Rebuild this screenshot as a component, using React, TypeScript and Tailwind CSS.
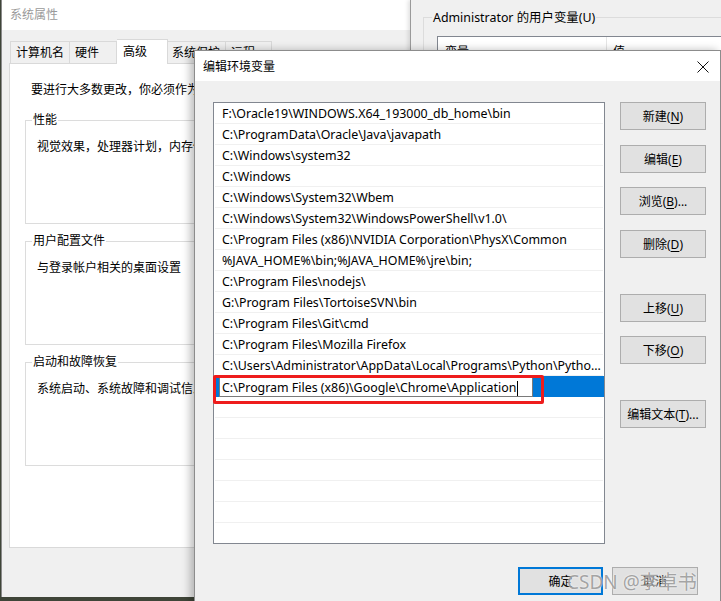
import React from "react";

const paths = [
  "F:\\Oracle19\\WINDOWS.X64_193000_db_home\\bin",
  "C:\\ProgramData\\Oracle\\Java\\javapath",
  "C:\\Windows\\system32",
  "C:\\Windows",
  "C:\\Windows\\System32\\Wbem",
  "C:\\Windows\\System32\\WindowsPowerShell\\v1.0\\",
  "C:\\Program Files (x86)\\NVIDIA Corporation\\PhysX\\Common",
  "%JAVA_HOME%\\bin;%JAVA_HOME%\\jre\\bin;",
  "C:\\Program Files\\nodejs\\",
  "G:\\Program Files\\TortoiseSVN\\bin",
  "C:\\Program Files\\Git\\cmd",
  "C:\\Program Files\\Mozilla Firefox",
  "C:\\Users\\Administrator\\AppData\\Local\\Programs\\Python\\Pytho...",
];

function Btn({ pre, k, post, className = "" }: { pre: string; k: string; post: string; className?: string }) {
  return (
    <div
      className={
        "flex h-[28px] w-[86px] items-center justify-center border border-[#adadad] bg-[#e1e1e1] pt-px text-[12px] text-black " +
        className
      }
    >
      <span>{pre}</span>
      <span className="underline underline-offset-2">{k}</span>
      <span>{post}</span>
    </div>
  );
}

function GroupBox({ label, text }: { label: string; text: string }) {
  return (
    <div className="relative h-[104px] w-[300px] border border-[#dcdcdc]">
      <div className="absolute left-[6px] top-[-9px] bg-white px-px text-[12px] leading-[16px] text-black">{label}</div>
      <div className="pl-[11px] pt-[18px] text-[12px] leading-[16px] text-black">{text}</div>
    </div>
  );
}

export default function App() {
  const font = "font-['Noto_Sans','Noto_Sans_CJK_SC',sans-serif]";
  return (
    <div className={"relative h-[601px] w-[721px] overflow-hidden bg-[#3f4538] " + font}>
      {/* System properties window */}
      <div className="absolute left-[1px] top-0 flex h-[597px] w-[440px] flex-col border-l border-[#8a8a8a] bg-[#f0f0f0]">
        <div className="flex h-[30px] items-center bg-white pl-[8px] text-[12px] text-[#9a9a9a]">系统属性</div>
        <div className="flex items-end pl-[8px] pt-[9px] text-[12px] text-black">
          <div className="flex h-[22px] w-[60px] items-center border border-b-0 border-[#d9d9d9] pl-[5px] pt-px">计算机名</div>
          <div className="flex h-[22px] w-[47px] items-center border border-b-0 border-l-0 border-[#d9d9d9] pl-[5px] pt-px">硬件</div>
          <div className="relative z-10 -mb-px flex h-[25px] w-[51px] items-start border border-b-0 border-l-0 border-[#d9d9d9] bg-white pl-[6px] pt-[3px]">
            高级
          </div>
          <div className="flex h-[22px] w-[58px] items-center border border-b-0 border-l-0 border-[#d9d9d9] pl-[4px] pt-px">系统保护</div>
          <div className="flex h-[22px] w-[46px] items-center border border-b-0 border-l-0 border-[#d9d9d9] pl-[5px] pt-px">远程</div>
        </div>
        <div className="ml-[7px] flex h-[485px] flex-col border border-[#d9d9d9] bg-white">
          <div className="pl-[21px] pt-[18px] text-[12px] leading-[16px] text-black">要进行大多数更改，你必须作为管理员登录。</div>
          <div className="flex flex-col gap-[17px] pl-[15px] pt-[22px]">
            <GroupBox label="性能" text="视觉效果，处理器计划，内存使用，以及虚拟内存" />
            <GroupBox label="用户配置文件" text="与登录帐户相关的桌面设置" />
            <GroupBox label="启动和故障恢复" text="系统启动、系统故障和调试信息" />
          </div>
        </div>
      </div>

      {/* Environment variables window behind */}
      <div className="absolute left-[410px] top-0 h-[80px] w-[320px] border-l border-[#9a9a9a] bg-[#f0f0f0] shadow-[-2px_0_4px_rgba(0,0,0,0.12)]">
        <div className="relative ml-[12px] mt-[17px] h-[60px] border-l border-t border-[#dcdcdc]">
          <div className="absolute left-[8px] top-[-9px] bg-[#f0f0f0] px-px text-[12.4px] leading-[18px] text-black">
            Administrator 的用户变量(U)
          </div>
          <div className="ml-[13px] mt-[18px] flex h-[40px] border border-[#828790] bg-white text-[12px] text-black">
            <div className="w-[169px] border-r border-[#e5e5e5] pl-[7px] pt-[6px]">变量</div>
            <div className="pl-[6px] pt-[6px]">值</div>
          </div>
        </div>
      </div>

      {/* Edit dialog */}
      <div className="absolute left-[194px] top-[50px] flex h-[560px] w-[527px] flex-col border border-[#8c8c8c] bg-[#f0f0f0] shadow-[-4px_0_8px_rgba(0,0,0,0.25)]">
        <div className="flex h-[30px] items-center justify-between bg-white pl-[8px] pr-[9px] pt-px text-[12px] text-black">
          <span>编辑环境变量</span>
          <svg width="12" height="12" viewBox="0 0 12 12" className="mr-[2px]">
            <path d="M0.5 0.5 L11.5 11.5 M11.5 0.5 L0.5 11.5" stroke="#111" strokeWidth="1" fill="none" />
          </svg>
        </div>
        <div className="flex pl-[18px] pt-[21px]">
          <div className="relative h-[442px] w-[392px] overflow-hidden border border-[#828790] bg-white text-[12.4px] text-black">
            {paths.map((p) => (
              <div
                key={p}
                className="mx-px flex h-[21px] items-center overflow-hidden whitespace-nowrap border-b border-[#f0f0f0] pl-[7px] pt-[2px]"
              >
                {p}
              </div>
            ))}
            <div className="flex h-[21px] items-stretch bg-[#0078d7] pl-[5px] pr-[71px] pt-px">
              <div className="flex flex-1 items-center border border-[#7a7a7a] bg-white pl-[2px] pt-[2px]">
                <span>C:\Program Files (x86)\Google\Chrome\Application</span>
                <span className="ml-px h-[15px] w-px bg-black" />
              </div>
            </div>
            {Array.from({ length: 7 }).map((_, i) => (
              <div key={i} className="mx-px h-[21px] border-b border-[#f0f0f0]" />
            ))}
          </div>
          <div className="ml-[15px] flex flex-col">
            <Btn pre="新建(" k="N" post=")" />
            <Btn pre="编辑(" k="E" post=")" className="mt-[15px]" />
            <Btn pre="浏览(" k="B" post=")..." className="mt-[14px]" />
            <Btn pre="删除(" k="D" post=")" className="mt-[15px]" />
            <Btn pre="上移(" k="U" post=")" className="mt-[36px]" />
            <Btn pre="下移(" k="O" post=")" className="mt-[14px]" />
            <Btn pre="编辑文本(" k="T" post=")..." className="mt-[36px]" />
          </div>
        </div>
        <div className="flex justify-end gap-[9px] pr-[22px] pt-[23px]">
          <div className="flex h-[28px] w-[85px] items-center justify-center border-2 border-[#0078d7] bg-[#e1e1e1] pt-px text-[12px] text-black">
            确定
          </div>
          <div className="flex h-[28px] w-[86px] items-center justify-center border border-[#adadad] bg-[#e1e1e1] pt-px text-[12px] text-black">
            取消
          </div>
        </div>
      </div>

      {/* annotation: red rectangle */}
      <div className="absolute left-[213px] top-[375px] h-[29px] w-[331px] rounded-[2px] border-[3px] border-[#ee1c1c]" />

      {/* watermark */}
      <div className="absolute left-[567px] top-[569px] text-[19px] leading-[26px] text-[#8e8e8e]/80 [text-shadow:0_0_2px_#ffffff]">
        CSDN @李卓书
      </div>
    </div>
  );
}
